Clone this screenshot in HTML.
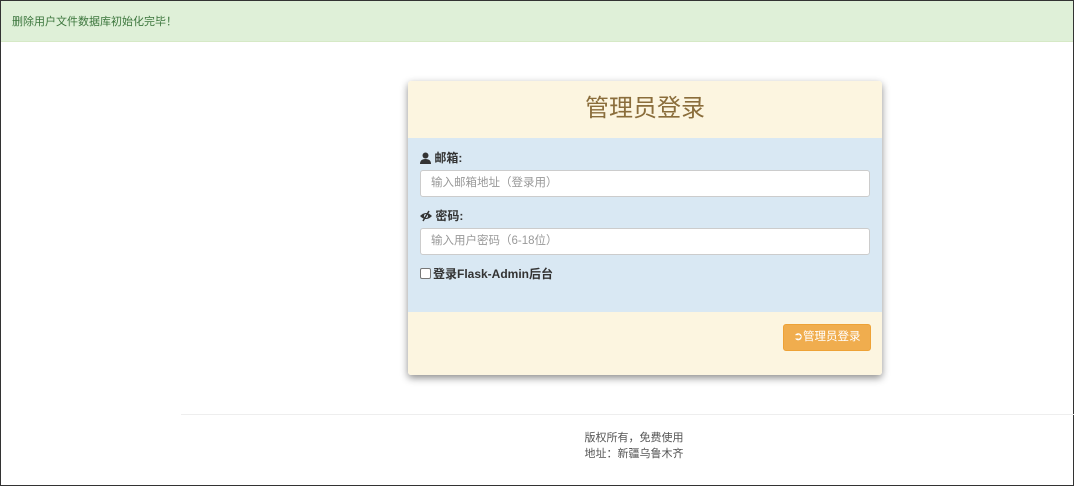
<!DOCTYPE html>
<html><head><meta charset="utf-8"><style>
*{box-sizing:border-box;margin:0;padding:0}
body{width:1074px;height:486px;overflow:hidden;background:#fff;font-family:"Liberation Sans","Noto Sans CJK SC",sans-serif;font-size:12px;color:#333;position:relative;border:1px solid #333}
.alert{position:absolute;left:0;top:0;width:1072px;height:41px;background:#dff0d8;color:#3c763d;padding:12px 11px;font-size:11px;border-bottom:1px solid #d6e9c6}
.panel{position:absolute;left:407px;top:80px;width:474px;height:294px;box-shadow:0 3px 8px rgba(0,0,0,.45);border-radius:3px;overflow:hidden}
.ph{height:57px;background:#fcf5e0;color:#8a6d3b;font-size:24px;text-align:center;line-height:56px}
.pb{height:174px;background:#d9e8f3;padding:12px 12px}
.pf{height:63px;background:#fcf5e0;position:relative}
label{display:block;font-weight:bold;font-size:12px;height:20px;line-height:16px;color:#333}
.in{height:27px;background:#fff;border:1px solid #ccc;border-radius:3px;padding:0 10px;line-height:25px;color:#999;font-size:11.5px;margin-bottom:11px}
.btn{position:absolute;right:11px;top:12px;width:88px;height:27px;background:#f0ad4e;border:1px solid #eea236;border-radius:3px;color:#fff;font-size:11.5px;line-height:25px;text-align:center}
hr{position:absolute;left:180px;top:413px;width:894px;border:0;border-top:1px solid #eee}
.foot{position:absolute;left:0;width:1266px;top:429px;text-align:center;color:#555;font-size:11px;line-height:16px}
svg{vertical-align:-2px}
</style></head><body>
<div class="alert">删除用户文件数据库初始化完毕！</div>
<div class="panel">
<div class="ph">管理员登录</div>
<div class="pb">
<label><svg width="11" height="12" viewBox="0 0 11 12"><circle cx="5.5" cy="3.5" r="3" fill="#333"/><path d="M0 12 Q0 7 5.5 7 Q11 7 11 12Z" fill="#333"/></svg> 邮箱:</label>
<div class="in">输入邮箱地址（登录用）</div>
<label><svg width="12" height="12" viewBox="0 0 12 12"><path d="M0 6 Q6 0 12 6 Q6 12 0 6Z" fill="#333"/><circle cx="6" cy="6" r="2" fill="#d9e8f3"/><path d="M3 11 L9 1" stroke="#333" stroke-width="1.5"/></svg> 密码:</label>
<div class="in">输入用户密码（6-18位）</div>
<label style="margin-top:2px"><span style="display:inline-block;width:11px;height:11px;border:1px solid #777;border-radius:2px;background:#fff;vertical-align:-1px;margin-right:2px"></span>登录Flask-Admin后台</label>
</div>
<div class="pf"><div class="btn">➲管理员登录</div></div>
</div>
<hr>
<div class="foot">版权所有，免费使用<br>地址：新疆乌鲁木齐</div>
</body></html>
